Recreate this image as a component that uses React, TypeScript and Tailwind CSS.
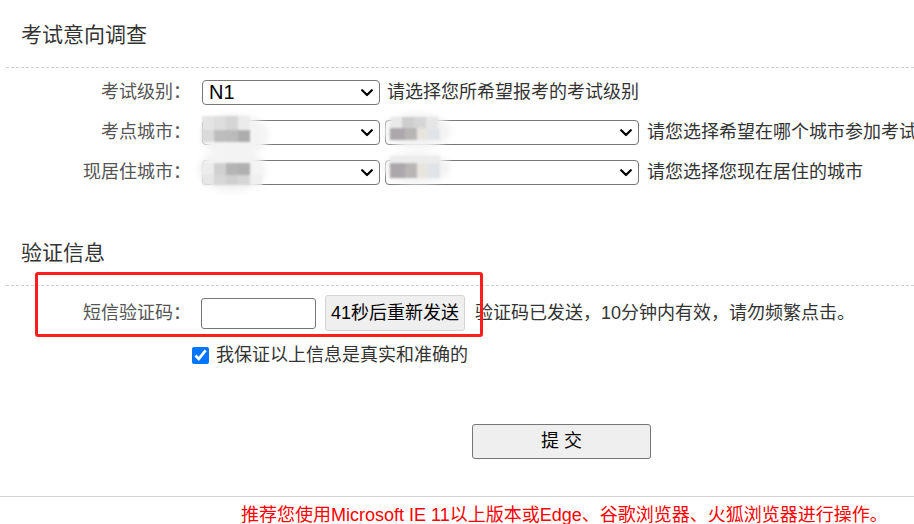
import type { ReactNode } from 'react';

type Block = [number, number, number, number, string];

interface Blur {
  id: string;
  blob: [number, number, number, number];
  blocks: Block[];
}

const blurA: Blur = {
  id: 'ma',
  blob: [33, 16, 34, 22],
  blocks: [
    [0, -4, 12, 14, '#e4e4e4'],
    [12, -4, 12, 14, '#dedede'],
    [24, -4, 12, 14, '#d5d5d5'],
    [36, -4, 12, 14, '#ebebeb'],
    [0, 10, 12, 12, '#dadada'],
    [12, 10, 12, 12, '#bdbdbd'],
    [24, 10, 12, 12, '#bbbbbb'],
    [36, 10, 12, 12, '#adadad'],
  ],
};

const blurB: Blur = {
  id: 'mb',
  blob: [32, 11, 34, 18],
  blocks: [
    [5, -3, 12, 11, '#e9e9e9'],
    [17, -3, 12, 11, '#cecece'],
    [29, -3, 12, 11, '#d6d6d6'],
    [41, -3, 12, 11, '#e6e6e6'],
    [5, 8, 15, 12, '#aca7ab'],
    [20, 8, 12, 12, '#b8b5b5'],
    [32, 8, 11, 12, '#e8e4de'],
    [43, 8, 12, 12, '#e0e4e9'],
  ],
};

const blurC: Blur = {
  id: 'mc',
  blob: [30, 10, 34, 22],
  blocks: [
    [0, 3, 12, 12, '#ececec'],
    [12, 3, 12, 12, '#d0d0d0'],
    [24, 3, 12, 12, '#b4b4b4'],
    [36, 3, 12, 12, '#b0b0b0'],
    [0, 15, 12, 10, '#e6e6e6'],
    [12, 15, 12, 10, '#d6d6d6'],
    [24, 15, 12, 10, '#cfcfcf'],
    [36, 15, 12, 10, '#d5d5d5'],
    [48, 15, 12, 10, '#efefef'],
  ],
};

const blurD: Blur = {
  id: 'md',
  blob: [32, 8, 34, 16],
  blocks: [
    [5, -4, 50, 7, '#ececec'],
    [5, 3, 15, 15, '#aca7ab'],
    [20, 3, 12, 15, '#b8b5b5'],
    [32, 3, 11, 15, '#e8e4de'],
    [43, 3, 12, 15, '#e0e4e9'],
  ],
};

function Mosaic({ blur }: { blur: Blur }) {
  const [cx, cy, rx, ry] = blur.blob;
  return (
    <svg
      className="absolute left-[-10px] top-[-12px] pointer-events-none"
      width="100"
      height="64"
      viewBox="-10 -12 100 64"
    >
      <defs>
        <filter id={`${blur.id}-soft`} x="-50%" y="-50%" width="200%" height="200%">
          <feGaussianBlur stdDeviation="3" />
        </filter>
        <filter id={`${blur.id}-px`} x="-20%" y="-20%" width="140%" height="140%">
          <feGaussianBlur stdDeviation="0.8" />
        </filter>
      </defs>
      <ellipse cx={cx} cy={cy} rx={rx} ry={ry} fill="#f3f3f3" filter={`url(#${blur.id}-soft)`} />
      <g filter={`url(#${blur.id}-px)`}>
        {blur.blocks.map(([x, y, w, h, c], i) => (
          <rect key={i} x={x} y={y} width={w} height={h} fill={c} />
        ))}
      </g>
    </svg>
  );
}

function Select({ width, value, blur }: { width: string; value?: string; blur?: Blur }) {
  return (
    <div className={`relative h-[25px] ${width}`}>
      <select
        className="appearance-none w-full h-full border border-[#767676] rounded-[4px] bg-white pl-[6px] text-[20px] leading-[23px] text-black outline-none"
        defaultValue={value ?? ''}
      >
        <option value={value ?? ''}>{value ?? ''}</option>
      </select>
      <svg
        className="absolute right-[7px] top-[9px] pointer-events-none"
        width="12"
        height="8"
        viewBox="0 0 12 8"
      >
        <path d="M1.2 1.2 6 6 10.8 1.2" fill="none" stroke="#000" strokeWidth="2.2" strokeLinecap="round" strokeLinejoin="round" />
      </svg>
      {blur && <Mosaic blur={blur} />}
    </div>
  );
}

function Row({ label, children }: { label: string; children: ReactNode }) {
  return (
    <div className="flex items-center h-[25px]">
      <div className="w-[191px] shrink-0 text-right text-[18px] leading-[25px] text-[#555]">{label}</div>
      <div className="ml-[11px] flex items-center whitespace-nowrap">{children}</div>
    </div>
  );
}

function Hint({ children, className = '' }: { children: ReactNode; className?: string }) {
  return <span className={`text-[18px] leading-[25px] text-[#333] ${className}`}>{children}</span>;
}

export default function App() {
  return (
    <div
      className="relative w-[914px] h-[524px] overflow-hidden bg-white text-[#333]"
      style={{ fontFamily: '"Liberation Sans", "Noto Sans CJK SC", sans-serif' }}
    >
      <div
        className="h-[67px] flex items-center pl-[21px] text-[21px] text-[#333]"
        style={{ fontFamily: '"Noto Sans CJK SC", sans-serif' }}
      >
        考试意向调查
      </div>
      <div className="ml-[6px] border-t border-dashed border-[#cfcfcf]" />

      <div className="mt-[12px] flex flex-col gap-[15px]">
        <Row label="考试级别：">
          <Select width="w-[178px]" value="N1" />
          <Hint className="ml-[7px]">请选择您所希望报考的考试级别</Hint>
        </Row>
        <Row label="考点城市：">
          <Select width="w-[178px]" blur={blurA} />
          <div className="ml-[5px]">
            <Select width="w-[254px]" blur={blurB} />
          </div>
          <Hint className="ml-[8px]">请您选择希望在哪个城市参加考试</Hint>
        </Row>
        <Row label="现居住城市：">
          <Select width="w-[178px]" blur={blurC} />
          <div className="ml-[5px]">
            <Select width="w-[254px]" blur={blurD} />
          </div>
          <Hint className="ml-[8px]">请您选择您现在居住的城市</Hint>
        </Row>
      </div>

      <div
        className="mt-[47px] h-[40px] flex items-center pl-[21px] text-[21px] text-[#333]"
        style={{ fontFamily: '"Noto Sans CJK SC", sans-serif' }}
      >
        验证信息
      </div>
      <div className="mt-[13px] ml-[6px] border-t border-dashed border-[#cfcfcf]" />

      <div className="mt-[9px] flex items-center h-[36px]">
        <div className="w-[191px] shrink-0 text-right text-[18px] leading-[25px] text-[#555]">短信验证码：</div>
        <input
          type="text"
          className="ml-[10px] w-[115px] h-[31px] border border-[#767676] rounded-[3px] bg-white outline-none"
        />
        <button className="ml-[9px] w-[140px] h-[36px] border border-[#d4d4d4] rounded-[3px] bg-[#efefef] text-[18px] text-black">
          41秒后重新发送
        </button>
        <span className="ml-[10px] whitespace-nowrap text-[18px] leading-[25px] text-[#333]">
          验证码已发送，10分钟内有效，请勿频繁点击。
        </span>
      </div>

      <div className="mt-[15px] h-[18px] flex items-center pl-[192px]">
        <input type="checkbox" defaultChecked className="w-[17px] h-[17px] m-0 accent-[#0075ff]" />
        <span className="ml-[7px] text-[18px] leading-[24px] text-[#333]">我保证以上信息是真实和准确的</span>
      </div>

      <div className="mt-[60px] pl-[472px]">
        <button className="w-[179px] h-[35px] border border-[#767676] rounded-[3px] bg-[#efefef] text-[18px] text-black">
          提 交
        </button>
      </div>

      <div className="mt-[37px] border-t border-[#d3d3d3]" />
      <div
        className="mt-[6px] pl-[241px] whitespace-nowrap text-[18px] leading-[24px] text-[#ff0000]"
        style={{ fontFamily: '"Liberation Sans", "Noto Sans CJK SC", sans-serif' }}
      >
        推荐您使用Microsoft IE 11以上版本或Edge、谷歌浏览器、火狐浏览器进行操作。
      </div>

      <div className="absolute left-[35px] top-[272px] w-[448px] h-[65px] border-[3px] border-[#ff1e1e] rounded-[3px] pointer-events-none" />
    </div>
  );
}
